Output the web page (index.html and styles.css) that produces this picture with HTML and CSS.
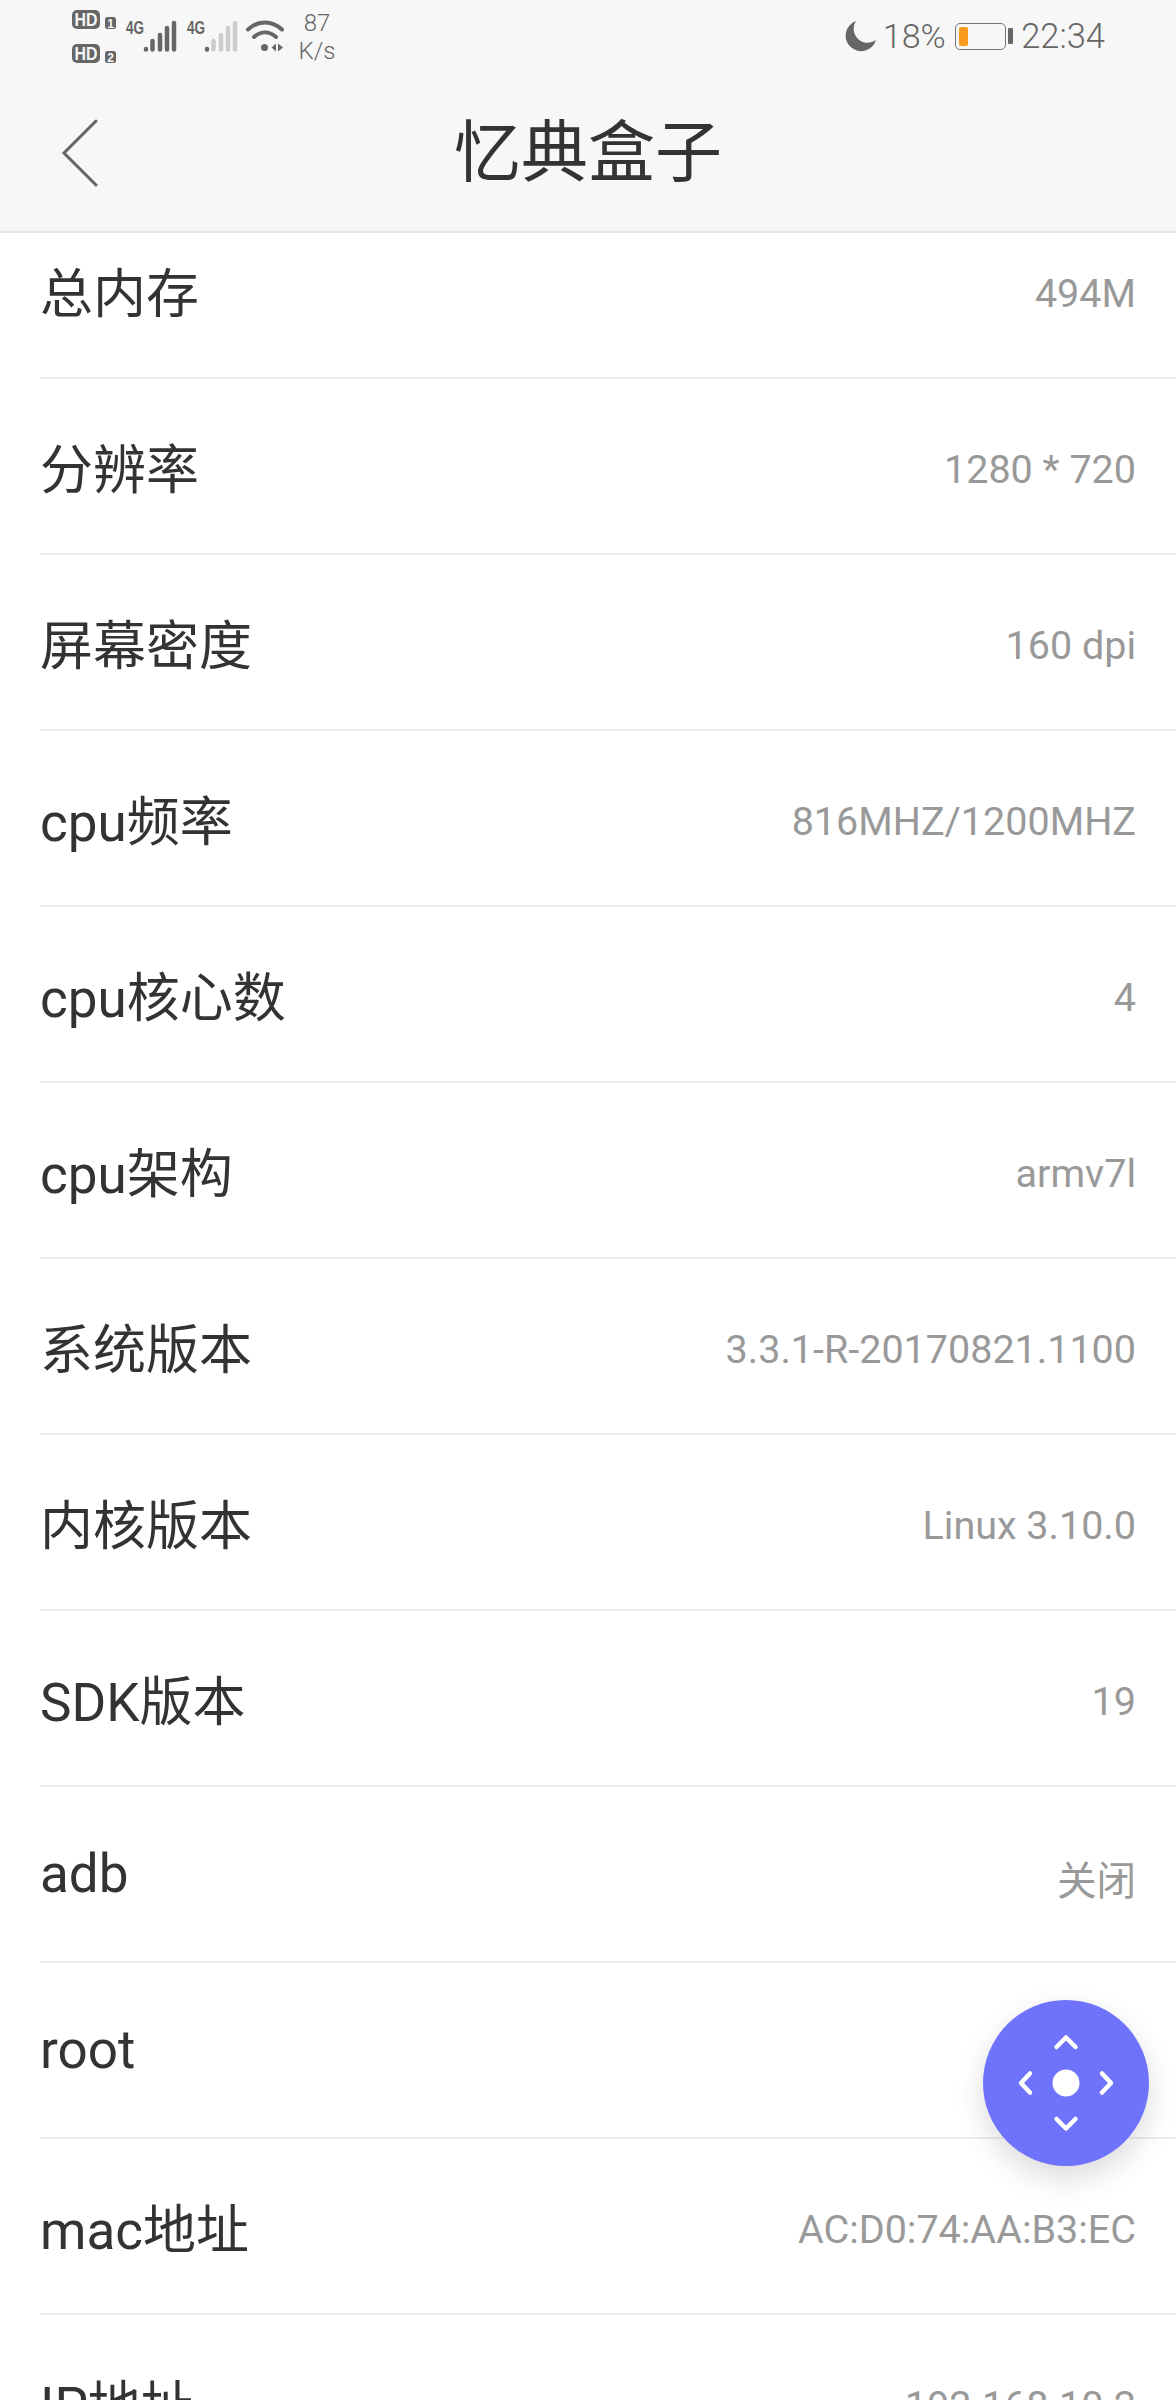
FILE: index.html
```html
<!DOCTYPE html>
<html lang="zh-CN">
<head>
  <meta charset="UTF-8">
  <title>忆典盒子</title>
  <link rel="stylesheet" href="styles.css">
</head>
<body>
<div class="head">
  <div class="status">
    <div class="status-left">
      <svg class="status-icons" width="212" height="56" viewBox="72 8 212 56">
        <rect x="72" y="10" width="28" height="19" rx="5" fill="#666"/>
        <text x="86" y="26" class="hd" textLength="23" lengthAdjust="spacingAndGlyphs">HD</text>
        <rect x="105" y="17" width="11" height="12" rx="2.5" fill="#666"/>
        <text x="110.5" y="27.500" class="sim">1</text>
        <rect x="72" y="44" width="28" height="19" rx="5" fill="#666"/>
        <text x="86" y="60" class="hd" textLength="23" lengthAdjust="spacingAndGlyphs">HD</text>
        <rect x="105" y="51" width="11" height="12" rx="2.5" fill="#666"/>
        <text x="110.5" y="61.500" class="sim">2</text>

        <text x="126" y="34" class="net" textLength="18" lengthAdjust="spacingAndGlyphs">4G</text>
        <path class="bar" d="M146 49v.5M152.500 41v8.500M160 35v14.500M167 28v21.500M174 23v26.500"/>
        <text x="187" y="34" class="net" textLength="18" lengthAdjust="spacingAndGlyphs">4G</text>
        <path class="bar" d="M207 49v.5"/>
        <path class="bar light" d="M213.500 41v8.500M221 35v14.500M228 28v21.500M235 23v26.500"/>

        <path class="wifi" d="M248 29.500C258 20 272 20 282 29.500M254 37C261 31 269 31 276 37"/>
        <circle cx="264.500" cy="47.500" r="3.500" fill="#666"/>
        <path d="M276 43.500v8l-4.500-4zM278 43.500v8l5-4z" fill="#666"/>
      </svg>
      <div class="speed"><span>87</span><span>K/s</span></div>
    </div>
    <div class="status-right">
      <svg class="moon" width="32" height="32" viewBox="845 20 32 32">
        <path d="M856 21A15.500 15.500 0 1 0 876 40A14 14 0 0 1 856 21Z" fill="#666"/>
      </svg>
      <span class="percent">18%</span>
      <div class="battery"><div class="battery-level"></div></div>
      <div class="battery-nub"></div>
      <span class="clock">22:34</span>
    </div>
  </div>
  <div class="title-bar">
    <svg class="back" width="40" height="70" viewBox="60 116 40 70">
      <path d="M96 120L64 152L96 184" fill="none" stroke="#666" stroke-width="3" stroke-linecap="round"/>
    </svg>
    <h1 class="title">忆典盒子</h1>
  </div>
</div>

<ul class="list">
  <li class="row"><span class="name">总内存</span><span class="value">494M</span></li>
  <li class="row"><span class="name">分辨率</span><span class="value">1280 * 720</span></li>
  <li class="row"><span class="name">屏幕密度</span><span class="value">160 dpi</span></li>
  <li class="row"><span class="name">cpu频率</span><span class="value">816MHZ/1200MHZ</span></li>
  <li class="row"><span class="name">cpu核心数</span><span class="value">4</span></li>
  <li class="row"><span class="name">cpu架构</span><span class="value">armv7l</span></li>
  <li class="row"><span class="name">系统版本</span><span class="value">3.3.1-R-20170821.1100</span></li>
  <li class="row"><span class="name">内核版本</span><span class="value">Linux 3.10.0</span></li>
  <li class="row"><span class="name">SDK版本</span><span class="value">19</span></li>
  <li class="row"><span class="name">adb</span><span class="value">关闭</span></li>
  <li class="row"><span class="name">root</span><span class="value"></span></li>
  <li class="row"><span class="name">mac地址</span><span class="value">AC:D0:74:AA:B3:EC</span></li>
  <li class="row"><span class="name">IP地址</span><span class="value">192.168.10.2</span></li>
</ul>

<div class="fab">
  <svg width="166" height="166" viewBox="0 0 166 166">
    <path d="M73.500 47L83 37.500L92.500 47M47 73.500L38 83L47 92.500M119 73.500L128 83L119 92.500M73.500 119L83 128.500L92.500 119" fill="none" stroke="#fff" stroke-width="4.500" stroke-linecap="round" stroke-linejoin="round"/>
    <circle cx="83" cy="83" r="13.500" fill="#fff"/>
  </svg>
</div>
</body>
</html>
```

FILE: styles.css
```css
* {
  margin: 0;
  padding: 0;
  list-style: none;
  box-sizing: border-box;
}

html, body {
  height: 2400px;
  overflow: hidden;
}

body {
  position: relative;
  background-color: #fff;
  font-family: Roboto, "Noto Sans CJK SC", sans-serif;
}

.head {
  position: relative;
  z-index: 2;
  height: 233px;
  background-color: #f7f7f7;
  border-bottom: 2px solid #e6e6e6;
}

/* status bar */
.status {
  display: flex;
  justify-content: space-between;
  height: 72px;
  padding: 8px 71px 0 72px;
  color: #666;
}

.status-left {
  display: flex;
}

.status-icons text {
  font-family: "Liberation Sans", sans-serif;
  font-weight: bold;
  fill: #666;
}

.status-icons .hd {
  font-size: 18px;
  fill: #f7f7f7;
  text-anchor: middle;
}

.status-icons .sim {
  font-size: 12px;
  fill: #f7f7f7;
  text-anchor: middle;
}

.status-icons .net {
  font-size: 18px;
}

.bar {
  fill: none;
  stroke: #666;
  stroke-width: 4.500;
  stroke-linecap: round;
}

.bar.light {
  stroke: #ccc;
}

.wifi {
  fill: none;
  stroke: #666;
  stroke-width: 4;
  stroke-linecap: round;
}

.speed {
  display: flex;
  flex-direction: column;
  align-items: center;
  width: 40px;
  margin-left: 13px;
  padding-top: 1px;
  font-size: 24px;
  line-height: 28px;
  font-weight: 300;
}

.status-right {
  display: flex;
  align-items: center;
  height: 56px;
  font-size: 34px;
  font-weight: 300;
}

.percent {
  margin-left: 6px;
}

.battery {
  width: 51px;
  height: 27px;
  margin-left: 9px;
  padding: 3px;
  border: 1.500px solid #777;
  border-radius: 5px;
}

.battery-level {
  width: 9px;
  height: 100%;
  border-radius: 2px;
  background-color: #f79a1e;
}

.battery-nub {
  width: 5px;
  height: 16px;
  margin-left: 2px;
  border-radius: 1px;
  background-color: #666;
}

.clock {
  margin-left: 8.500px;
  font-size: 34.500px;
}

/* title */
.title-bar {
  display: grid;
  grid-template-columns: 1fr auto 1fr;
  align-items: center;
  height: 159px;
}

.back {
  margin-left: 60px;
}

.title {
  padding-top: 3px;
  font-size: 67px;
  line-height: 80px;
  font-weight: 400;
  color: #333;
}

/* list */
.list {
  margin-top: -30px;
}

.row {
  display: flex;
  justify-content: space-between;
  align-items: center;
  height: 176px;
  margin-left: 40px;
  padding-right: 40px;
  border-bottom: 2px solid #eee;
}

.name {
  font-size: 53px;
  color: #333;
}

.value {
  padding-top: 6px;
  font-size: 39.500px;
  color: #999;
}

.fab {
  position: absolute;
  left: 983px;
  top: 2000px;
  width: 166px;
  height: 166px;
  border-radius: 50%;
  background-color: #6f73fb;
  box-shadow: 0 12px 30px rgba(0, 0, 0, 0.14);
}
```
